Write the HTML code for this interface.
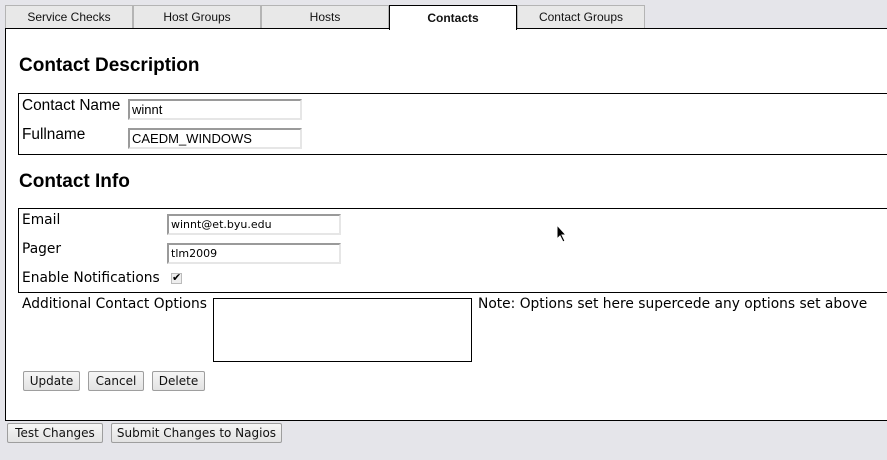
<!DOCTYPE html>
<html><head><meta charset="utf-8"><style>
*{box-sizing:border-box;margin:0;padding:0}
body{width:887px;height:460px;background:#e5e5ea;position:relative;overflow:hidden;font-family:"Liberation Sans",sans-serif;color:#000}
.a{position:absolute}
.tab{position:absolute;top:5px;height:24px;width:128px;background:#e8e8e8;border:1px solid #b4b4b4;border-bottom:none;font:12px "Liberation Sans",sans-serif;text-align:center;line-height:22px;color:#111}
.tab.on{background:#fff;border:1px solid #000;border-bottom:none;font-weight:bold;height:25px;z-index:3;line-height:24px}
#panel{position:absolute;left:5px;top:28px;width:890px;height:393px;background:#fff;border:1px solid #000}
.box{position:absolute;left:18px;width:880px;border:1px solid #000}
.in{position:absolute;height:21px;width:174px;border:2px solid;border-color:#9a9a9a #e6e6e6 #e6e6e6 #9a9a9a;background:#fff;font:11px "DejaVu Sans",sans-serif;padding-left:2px;line-height:17px}
.in.l{font:13px "Liberation Sans",sans-serif;line-height:17px}
.lbl{position:absolute;font-size:15.4px}
.dj{font-family:"DejaVu Sans",sans-serif;font-size:13.8px}
.btn{position:absolute;height:20px;border:1px solid #9e9e9e;border-radius:2px;background:linear-gradient(#f6f6f6,#e2e2e2);font:12px "DejaVu Sans",sans-serif;text-align:center;line-height:18px;color:#111}
h2{position:absolute;font-size:19px;font-weight:bold}
</style></head><body>
<div class="tab" style="left:5px">Service Checks</div>
<div class="tab" style="left:133px">Host Groups</div>
<div class="tab" style="left:261px">Hosts</div>
<div class="tab on" style="left:389px">Contacts</div>
<div class="tab" style="left:517px">Contact Groups</div>
<div id="panel"></div>
<h2 style="left:19px;top:55px">Contact Description</h2>
<div class="box" style="top:93px;height:62px"></div>
<div class="lbl" style="left:22px;top:97px">Contact Name</div>
<div class="in l" style="left:128px;top:99px">winnt</div>
<div class="lbl" style="left:22px;top:126px">Fullname</div>
<div class="in l" style="left:128px;top:128px">CAEDM_WINDOWS</div>
<h2 style="left:19px;top:171px">Contact Info</h2>
<div class="box" style="top:208px;height:85px"></div>
<div class="lbl dj" style="left:22px;top:212px">Email</div>
<div class="in" style="left:167px;top:214px">winnt@et.byu.edu</div>
<div class="lbl dj" style="left:22px;top:241px">Pager</div>
<div class="in" style="left:167px;top:243px">tlm2009</div>
<div class="lbl dj" style="left:22px;top:270px">Enable Notifications</div>
<div class="a" style="left:171px;top:273px;width:11px;height:11px;background:#eee;border:1px solid #bbb;font-size:11px;line-height:9px;text-align:center">✔</div>
<div class="lbl dj" style="left:22px;top:296px">Additional Contact Options</div>
<div class="a" style="left:213px;top:298px;width:259px;height:64px;border:1px solid #000"></div>
<div class="lbl dj" style="left:478px;top:296px">Note: Options set here supercede any options set above</div>
<div class="btn" style="left:23px;top:371px;width:57px">Update</div>
<div class="btn" style="left:88px;top:371px;width:56px">Cancel</div>
<div class="btn" style="left:152px;top:371px;width:53px">Delete</div>
<div class="btn" style="left:7px;top:423px;width:96px">Test Changes</div>
<div class="btn" style="left:111px;top:423px;width:171px">Submit Changes to Nagios</div>
<svg class="a" style="left:556px;top:224px" width="12" height="20" viewBox="0 0 12 20"><path d="M1 1 L1 15 L4 12 L7 18 L9 17 L6 11 L10 11 Z" fill="#000" stroke="#fff" stroke-width="1"/></svg>
</body></html>
